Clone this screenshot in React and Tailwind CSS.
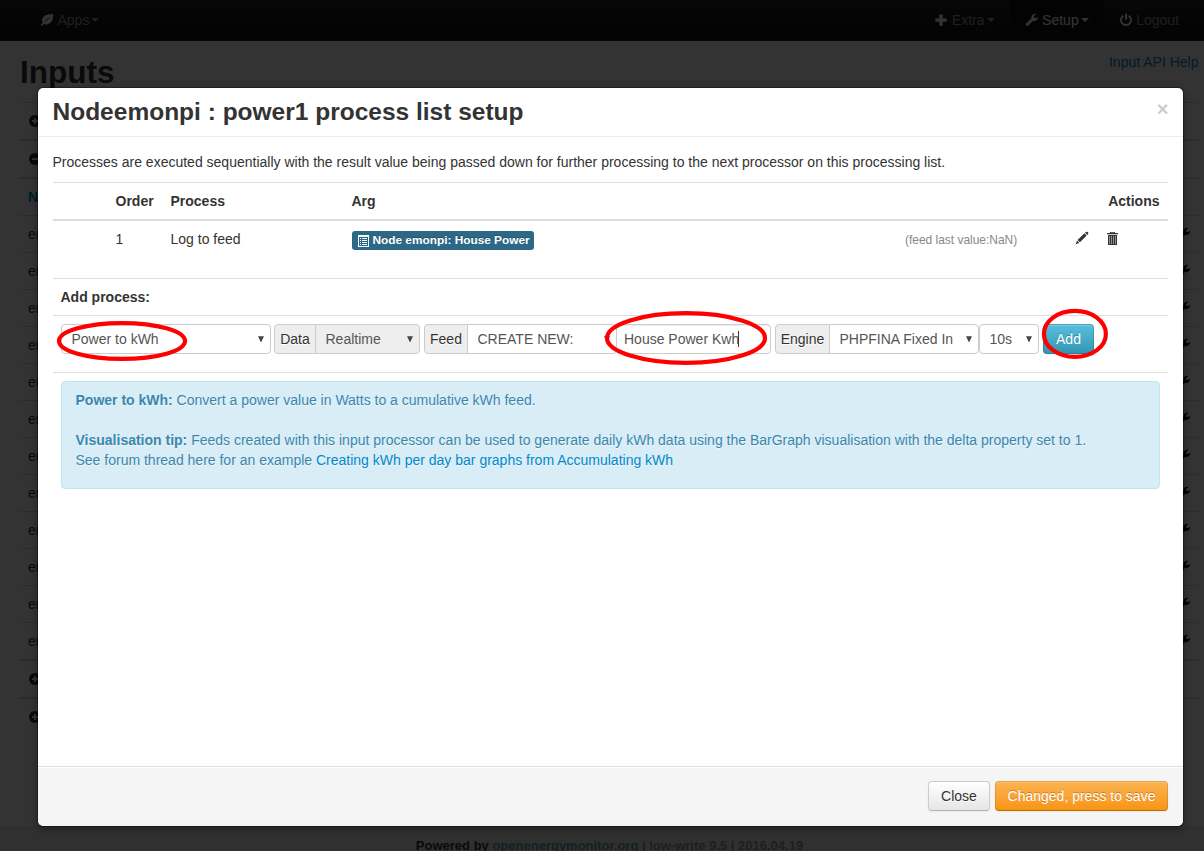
import React from 'react';

function Icon({ children, className = '' }) {
  return (
    <svg viewBox="0 0 14 14" width="14" height="14" fill="currentColor" className={`block shrink-0 ${className}`}>
      {children}
    </svg>
  );
}

const Leaf = ({ className }) => (
  <Icon className={className}>
    <path fillRule="evenodd" d="M13.1 1C9 1.200 4.700 1.700 2.800 4.800C1.800 6.500 2 8.400 2.700 9.600L.8 11.900L2 13L3.900 11C6.300 11.900 9.400 11.300 11.200 9C12.900 6.700 13.300 3.600 13.100 1ZM10.300 4.300L3.900 9.600C5.400 7 7.500 5.100 10.300 4.300Z" />
  </Icon>
);
const Plus = ({ className }) => (
  <Icon className={className}>
    <path d="M5.300 1.500h3.400V5.500h3.900v3.200H8.700v4H5.300V8.700H1.300V5.500h4Z" />
  </Icon>
);
const Wrench = ({ className }) => (
  <Icon className={className}>
    <path d="M11.200.9C9.200.4 7.200 1.400 6.500 3.200C6.200 4 6.200 4.800 6.400 5.600L1.300 10.300C.6 11 .6 11.900 1.200 12.500C1.800 13.100 2.800 13.200 3.400 12.500L8.200 7.800C10.700 8.300 13.100 6.500 13.200 3.700L11 5.300L9.100 4.700L9 2.900Z" />
  </Icon>
);
const Power = ({ className }) => (
  <Icon className={className}>
    <path d="M6 .8h2v6H6Z" />
    <path d="M4.300 2.800a5 5 0 1 0 5.400 0" fill="none" stroke="currentColor" strokeWidth="1.900" />
  </Icon>
);
const Circle = ({ minus }) => (
  <Icon>
    <path
      fillRule="evenodd"
      d={
        minus
          ? 'M7 1a6 6 0 1 0 0 12A6 6 0 1 0 7 1ZM4 6h6v2H4Z'
          : 'M7 1a6 6 0 1 0 0 12A6 6 0 1 0 7 1ZM6 4h2v2h2v2H8v2H6V8H4V6h2Z'
      }
    />
  </Icon>
);
const Pencil = () => (
  <Icon>
    <path d="M10.100 1.700L11.200.8Q12.100.4 12.900 1.200Q13.700 2.100 13.200 2.900L12.300 3.900ZM9.400 2.300L11.700 4.600L4.900 11.200L2.600 8.900ZM2 9.600L4.300 11.900L.7 13.300Z" />
  </Icon>
);
const Trash = () => (
  <Icon>
    <path fillRule="evenodd" d="M4 1h5v1h3v1.200H1V2h3ZM5 1.800V2h3V1.800Z" />
    <path d="M2 4h9v10H2Z" fillOpacity="0.55" />
    <path d="M2 4h9v1H2ZM2 13h9v1H2ZM2 5h1v8H2ZM4 5h1v8H4ZM6 5h1v8H6ZM8 5h1v8H8ZM10 5h1v8h-1Z" />
  </Icon>
);
const ListAlt = () => (
  <Icon>
    <path fillRule="evenodd" d="M1 1H12V13H1ZM2 3V12H11V3Z" />
    <path d="M3 4h1v1H3ZM5 4h5v1H5ZM3 6h1v1H3ZM5 6h5v1H5ZM3 8h1v1H3ZM5 8h5v1H5ZM3 10h1v1H3ZM5 10h5v1H5Z" />
  </Icon>
);
const Caret = () => (
  <svg viewBox="0 0 8 4" width="8" height="4" fill="currentColor" className="ml-0.5 block">
    <path d="M0 0h8L4 4Z" />
  </svg>
);

function NavItem({ icon: NavIcon, label, caret, active }) {
  return (
    <a
      className={
        active
          ? 'flex h-10 items-center bg-[#111] px-[15px] text-white shadow-[inset_0_3px_8px_rgba(0,0,0,0.125)]'
          : 'flex h-10 items-center px-[15px] text-[#999]'
      }
    >
      <NavIcon className="mr-[3.500px] text-white" />
      <span>{label}</span>
      {caret && <Caret />}
    </a>
  );
}

function Select({ children, className = '' }) {
  return (
    <div
      className={`flex h-[30px] items-center justify-between border border-[#ccc] pr-[6px] pl-[9.500px] text-[#555] ${className}`}
    >
      <span className="overflow-hidden whitespace-nowrap">{children}</span>
      <svg viewBox="0 0 6 7" width="6" height="7" className="block shrink-0" fill="#444">
        <path d="M0 .3h6L3 6.500Z" />
      </svg>
    </div>
  );
}

function AddOn({ children, className = '' }) {
  return (
    <span
      className={`flex h-[30px] items-center justify-center rounded-l border border-[#ccc] bg-[#eee] text-[#333] [text-shadow:0_1px_0_#fff] ${className}`}
    >
      {children}
    </span>
  );
}

const nodeRows = Array.from({ length: 12 }, (_, i) => i);

function Background() {
  return (
    <div className="h-[851px] overflow-hidden bg-white">
      <nav className="flex h-[41px] justify-between border-b border-[#252525] bg-gradient-to-b from-[#222] to-[#111] pr-[10px] pl-[25px]">
        <NavItem icon={Leaf} label="Apps" caret />
        <div className="flex">
          <NavItem icon={Plus} label="Extra" caret />
          <NavItem icon={Wrench} label="Setup" caret active />
          <NavItem icon={Power} label="Logout" />
        </div>
      </nav>
      <div className="h-[785px] pr-[5px] pl-5">
        <div className="flex h-[61px] justify-between">
          <h2 className="pt-[11px] text-[31.5px] leading-10 font-bold">Inputs</h2>
          <a className="pt-[11px] pr-[0.500px] text-[#08c]">Input API Help</a>
        </div>
        <div className="flex h-[37px] items-center border-t border-[#ddd] pl-2">
          <Circle />
        </div>
        <div className="flex h-[38px] items-center border-t-2 border-[#ddd] pl-2">
          <Circle minus />
        </div>
        <div className="flex h-[38px] items-center border-t-2 border-[#ddd] pl-2 font-bold text-[#08c]">Node</div>
        {nodeRows.map((i) => (
          <div key={i} className="flex h-[37px] items-center justify-between border-t border-[#ddd] pr-2 pl-2">
            <span>emonpi</span>
            <Wrench className="text-black" />
          </div>
        ))}
        <div className="flex h-[38px] items-center border-t-2 border-[#ddd] pl-2">
          <Circle />
        </div>
        <div className="flex h-[38px] items-center border-t-2 border-[#ddd] pl-2">
          <Circle />
        </div>
      </div>
      <footer className="h-[25px] bg-[#eee] pt-[10px] pl-[15px] text-center text-[13px] font-bold text-[#999]">
        <span className="text-[#333]">Powered by</span> <span className="text-[#6a9cb4]">openenergymonitor.org</span> |
        low-write 9.5 | 2016.04.19
      </footer>
    </div>
  );
}

function ProcessTable() {
  return (
    <div className="mt-[10px]">
      <div className="flex h-[37px] items-center border-t border-[#ddd] font-bold">
        <span className="w-[117.500px] pl-[62.500px]">Order</span>
        <span className="w-[181px]">Process</span>
        <span className="grow">Arg</span>
        <span className="pr-[8.500px]">Actions</span>
      </div>
      <div className="flex h-[59px] border-t-2 border-[#ddd] pt-2">
        <span className="w-[117.500px] pl-[62.500px]">1</span>
        <span className="w-[181.500px]">Log to feed</span>
        <div className="w-[553px] pt-[2px]">
          <span className="inline-flex h-[19px] w-[182px] items-start rounded-[3px] bg-[#2d6987] pl-[5px] text-[11.844px] leading-[18px] font-bold whitespace-nowrap text-white [text-shadow:0_-1px_0_rgba(0,0,0,0.25)]">
            <span className="mt-[3px] mr-[1.500px]">
              <ListAlt />
            </span>
            Node emonpi: House Power
          </span>
        </div>
        <span className="w-[170px] pt-px text-[11.950px] text-[#888]">(feed last value:NaN)</span>
        <div className="flex gap-[17px] pt-[2px]">
          <Pencil />
          <Trash />
        </div>
      </div>
      <div className="flex h-[37px] items-center border-t border-[#ddd] pl-[7.500px] font-bold">Add process:</div>
      <div className="flex h-[57px] border-t border-[#ddd] pt-2 pl-2">
        <Select className="mr-[3px] w-[210px] rounded">Power to kWh</Select>
        <AddOn className="w-[42px]">Data</AddOn>
        <Select className="-ml-px mr-1 w-[105px] rounded-r bg-[#eee]">Realtime</Select>
        <AddOn className="w-[44px]">Feed</AddOn>
        <Select className="-ml-px w-[150px] rounded-r">CREATE NEW:</Select>
        <div className="-ml-px mr-1 flex h-[30px] w-[155px] items-center rounded border border-[#ccc] pl-[7px] text-[#555] shadow-[inset_0_1px_1px_rgba(0,0,0,0.075)]">
          House Power Kwh
          <span className="-ml-px h-4 w-px bg-[#333]" />
        </div>
        <AddOn className="w-[55px]">Engine</AddOn>
        <Select className="-ml-px w-[150px] rounded-r">PHPFINA Fixed In</Select>
        <Select className="mr-1 w-[60px] rounded">10s</Select>
        <button className="h-[30px] w-[51px] rounded border border-[rgba(0,0,0,0.15)] bg-gradient-to-b from-[#5bc0de] to-[#2f96b4] bg-origin-border text-white shadow-[inset_0_1px_0_rgba(255,255,255,0.2),0_1px_2px_rgba(0,0,0,0.05)] [text-shadow:0_-1px_0_rgba(0,0,0,0.25)]">
          Add
        </button>
      </div>
      <div className="border-t border-[#ddd] p-2">
        <div className="h-[108px] rounded border border-[#bce8f1] bg-[#d9edf7] px-[13.500px] pt-2 text-[#3a87ad] [text-shadow:0_1px_0_rgba(255,255,255,0.5)]">
          <p>
            <b>Power to kWh:</b> Convert a power value in Watts to a cumulative kWh feed.
          </p>
          <p className="mt-5">
            <b>Visualisation tip:</b> Feeds created with this input processor can be used to generate daily kWh data using
            the BarGraph visualisation with the delta property set to 1.
          </p>
          <p>
            See forum thread here for an example{' '}
            <a className="text-[#08c]">Creating kWh per day bar graphs from Accumulating kWh</a>
          </p>
        </div>
      </div>
    </div>
  );
}

function Modal() {
  return (
    <section className="absolute top-[87px] left-[37px] flex h-[740px] w-[1147px] flex-col rounded-[6px] border border-[rgba(0,0,0,0.3)] bg-white bg-clip-padding shadow-[0_3px_7px_rgba(0,0,0,0.3)]">
      <header className="flex h-[49px] justify-between border-b border-[#eee] pr-[14.500px] pl-[14.500px]">
        <h3 className="pt-[9px] text-[24.500px] leading-[30px] font-bold">Nodeemonpi : power1 process list setup</h3>
        <span className="pt-[11px] text-[20px] font-bold text-black opacity-20">×</span>
      </header>
      <div className="grow px-[15px] pt-[15px]">
        <p className="-ml-[0.500px]">
          Processes are executed sequentially with the result value being passed down for further processing to the next
          processor on this processing list.
        </p>
        <ProcessTable />
      </div>
      <footer className="flex h-[60px] justify-end gap-[5px] rounded-b-[6px] border-t border-[#ddd] bg-[#f5f5f5] px-[15px] pt-[14px] shadow-[inset_0_1px_0_#fff]">
        <button className="h-[30px] w-[62px] rounded border border-[#ccc] border-b-[#b3b3b3] bg-gradient-to-b from-white to-[#e6e6e6] shadow-[inset_0_1px_0_rgba(255,255,255,0.2),0_1px_2px_rgba(0,0,0,0.05)] [text-shadow:0_1px_1px_rgba(255,255,255,0.75)]">
          Close
        </button>
        <button className="h-[30px] w-[173px] rounded border border-[rgba(0,0,0,0.1)] border-b-[rgba(0,0,0,0.25)] bg-gradient-to-b from-[#fbb450] to-[#f89406] bg-origin-border text-white shadow-[inset_0_1px_0_rgba(255,255,255,0.2),0_1px_2px_rgba(0,0,0,0.05)] [text-shadow:0_-1px_0_rgba(0,0,0,0.25)]">
          Changed, press to save
        </button>
      </footer>
    </section>
  );
}

function Highlights() {
  return (
    <svg
      viewBox="0 0 1204 851"
      className="pointer-events-none absolute inset-0 h-[851px] w-[1204px]"
      fill="none"
      stroke="#f00"
      strokeWidth="4.200"
    >
      <ellipse cx="122" cy="341" rx="63" ry="17.900" />
      <ellipse cx="686" cy="338" rx="79" ry="24.900" />
      <ellipse cx="1074.900" cy="333.900" rx="31" ry="23" />
    </svg>
  );
}

export default function App() {
  return (
    <div className="relative h-[851px] w-[1204px] overflow-hidden text-[14px] leading-5 text-[#333] [font-family:'Liberation_Sans',Arial,sans-serif]">
      <Background />
      <div className="absolute inset-0 bg-black/80" />
      <Modal />
      <Highlights />
    </div>
  );
}
